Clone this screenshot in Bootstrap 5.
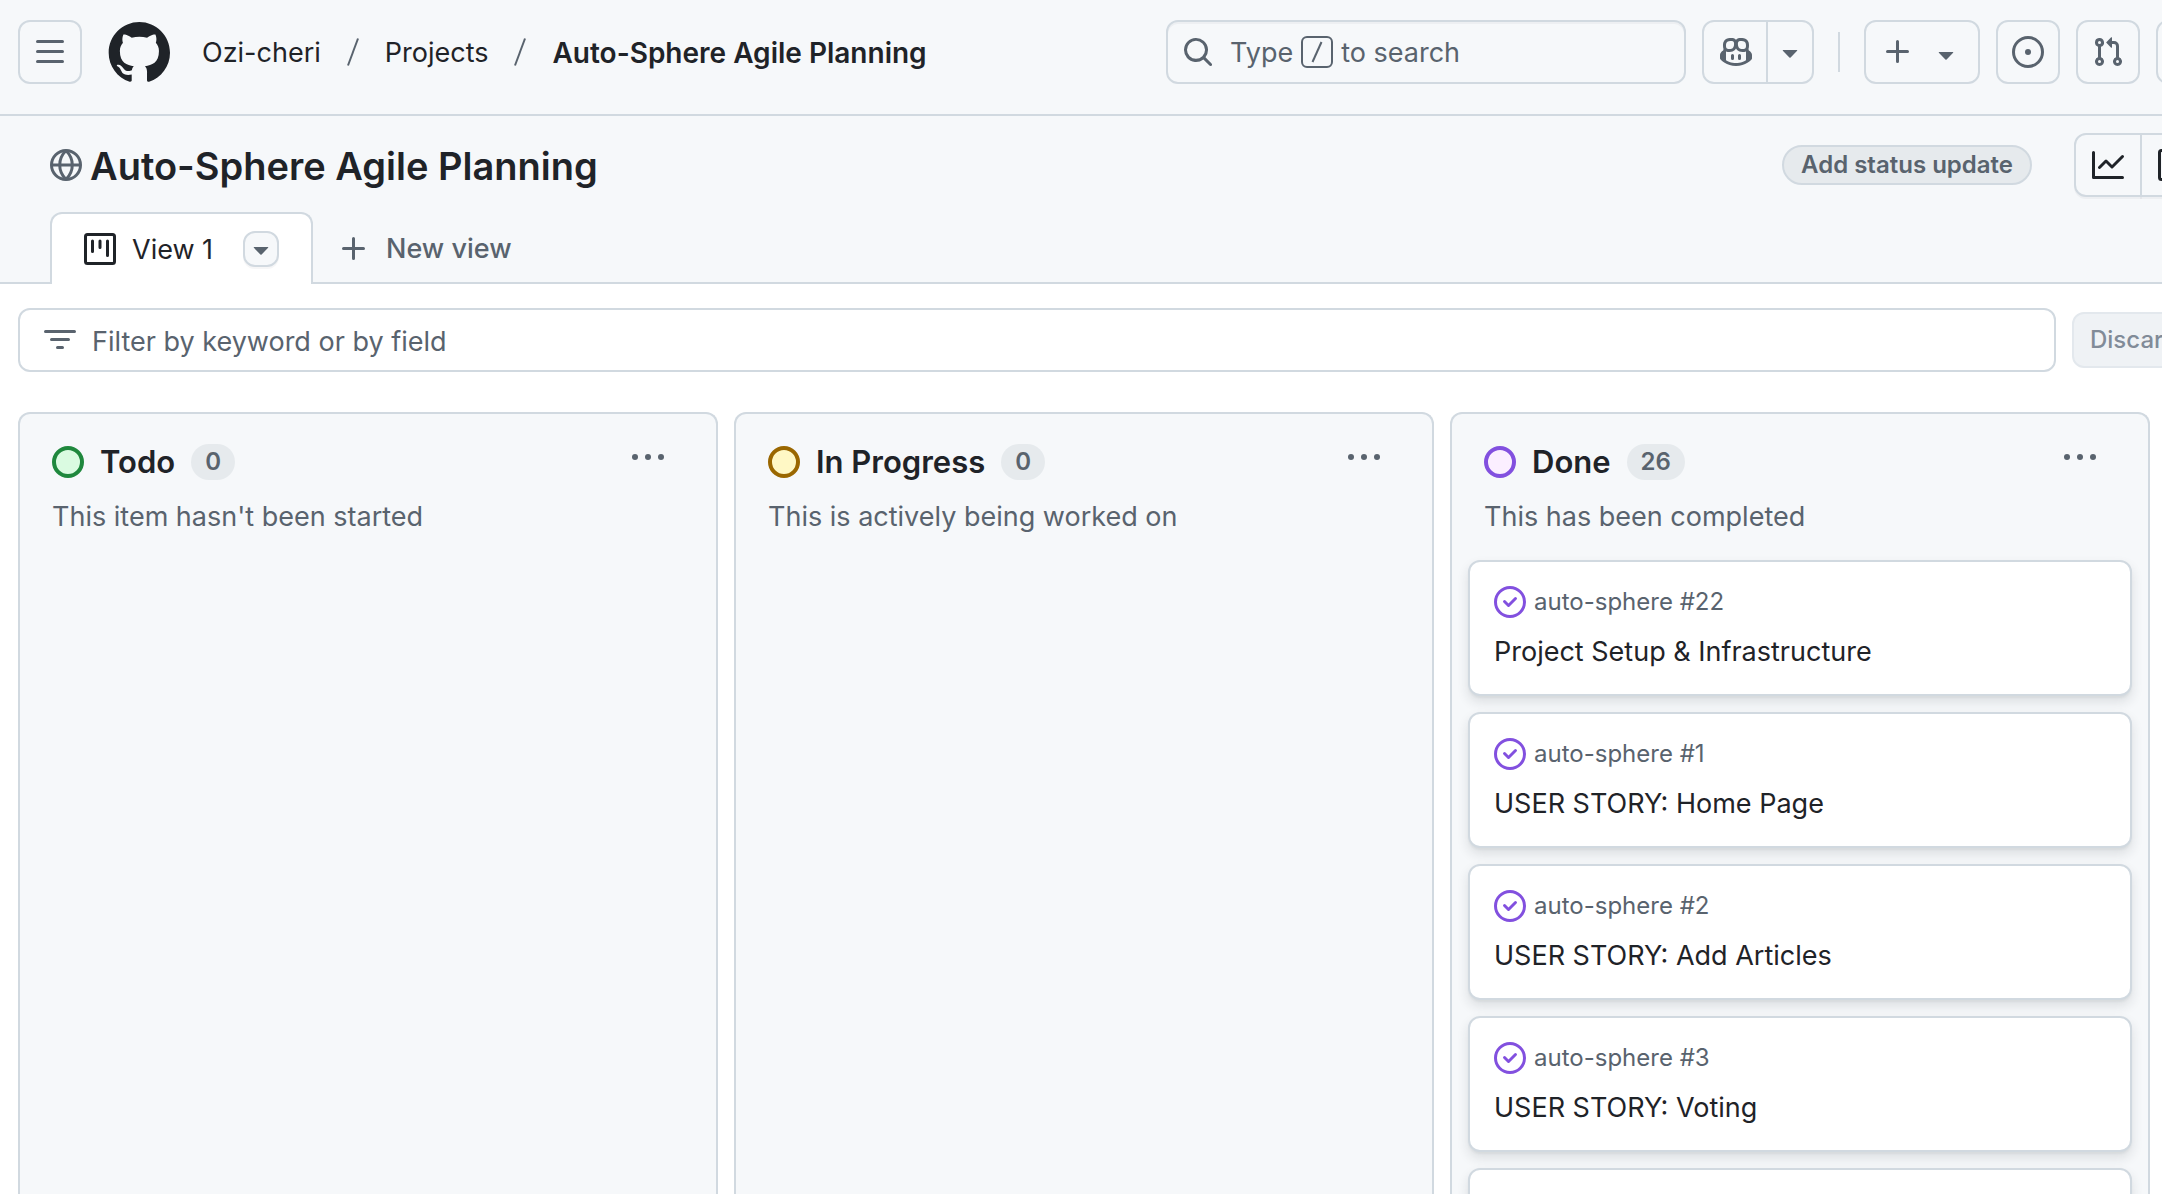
<!DOCTYPE html>
<html lang="en">
<head>
<meta charset="utf-8">
<meta name="viewport" content="width=device-width, initial-scale=1">
<title>Auto-Sphere Agile Planning</title>
<link href="https://cdn.jsdelivr.net/npm/bootstrap@5.3.0/dist/css/bootstrap.min.css" rel="stylesheet">
<style>
:root{--line:#d1d9e0;--ink:#1f2328;--soft:#59636e;--canvas:#f6f8fa;--chip:#e6eaed;--done:#8250df}
body{font-family:Inter,"Noto Sans",sans-serif;font-size:27px;line-height:40px;color:var(--ink);background:#fff;height:100vh;overflow:hidden}
svg{display:block;flex:none;fill:currentColor}
.oct{width:32px;height:32px}
.page{width:calc(100% + 58px);height:100%}
.soft{color:var(--soft)}
.topbar{background:var(--canvas);border-bottom:2px solid var(--line);padding:20px 0 30px 18px;height:116px}
.box{height:64px;min-width:64px;padding:0;border:2px solid var(--line);border-radius:12px;background:var(--canvas);color:var(--soft);display:flex;align-items:center;justify-content:center;flex:none}
.logo{margin-left:24px;color:var(--ink)}
.crumbs{margin-left:32px;gap:26px}
.crumbs a{color:var(--ink);text-decoration:none;white-space:nowrap;padding-top:2px}
.crumbs .here{font-size:28px;font-weight:600}
.crumbs svg{width:12px;height:28px;stroke:var(--soft);stroke-width:2;fill:none}
.searchbox{width:520px;justify-content:flex-start;padding-left:14px;box-shadow:inset 0 2px 0 rgba(31,35,40,.04)}
.searchbox span{padding-top:2px}
.searchbox kbd{width:32px;height:32px;padding:0;border:2px solid var(--soft);border-radius:6px;background:none;display:flex;align-items:center;justify-content:center;color:var(--soft);margin:0 8px}
.searchbox kbd svg{width:12px;height:22px;stroke:currentColor;stroke-width:2;fill:none}
.split-l{width:66px;padding-left:16px;justify-content:flex-start;border-radius:12px 0 0 12px}
.split-r{width:48px;min-width:48px;margin-left:-2px;border-radius:0 12px 12px 0}
.rule{width:2px;height:40px;background:var(--line)}
.newbtn{width:116px;justify-content:flex-start;padding-left:16px;gap:16px}
.newbtn .oct + .oct{margin-top:4px}
.projhead{background:var(--canvas);padding-top:16px;border-bottom:2px solid var(--line)}
.titlerow{padding-left:50px}
.projhead h1{font-size:38px;line-height:64px;font-weight:600;padding-top:2px}
.status{height:40px;padding:0 17px;border:2px solid var(--line);border-radius:20px;background:var(--chip);color:var(--soft);font-size:24px;line-height:36px;font-weight:600;margin-right:42px}
.tools .box{color:var(--ink);box-shadow:0 2px 0 rgba(31,35,40,.04)}
.tools .wide{width:80px;margin-left:-2px;padding-left:16px;justify-content:flex-start;border-radius:0 12px 12px 0}
.tabs{padding-left:50px;margin-top:14px;margin-bottom:-2px}
.tab-on{width:263px;height:72px;border:2px solid var(--line);border-bottom:0;border-radius:12px 12px 0 0;background:#fff;padding:0 32px}
.tab-on a{color:var(--ink);text-decoration:none;white-space:nowrap;padding-top:2px}
.mini{width:36px;height:36px;padding:0;border:2px solid var(--line);border-radius:12px;background:var(--canvas);color:var(--soft);display:flex;align-items:center;justify-content:center;box-shadow:0 2px 0 rgba(31,35,40,.04)}
.newview{border:0;background:none;color:var(--soft);font-weight:500;padding:2px 0 0;margin-left:25px;gap:16px}
.filterrow{padding:24px 0 40px 18px;gap:16px}
.filterbox{height:64px;border:2px solid var(--line);border-radius:12px;padding:0 24px;gap:16px;color:var(--soft)}
.filterbox input{border:0;outline:0;background:none;padding:2px 0 0;color:var(--ink);height:42px}
.filterbox input::placeholder{color:var(--soft);opacity:1}
.discard{width:148px;height:56px;border:2px solid #e3e8ed;border-radius:12px;background:#eff2f5;color:#818b98;font-size:24px;font-weight:500;padding:0 16px;text-align:left}
.board{gap:16px;padding-left:18px}
.lane{flex:0 0 700px;border:2px solid var(--line);border-bottom:0;border-radius:12px 12px 0 0;background:var(--canvas);padding:26px 16px 0}
.lanehead{padding:0 16px;height:44px;gap:16px}
.lanehead h2{font-size:31px;line-height:40px;font-weight:600}
.ring{width:32px;height:32px;border:4px solid;border-radius:50%}
.ring-g{color:#1f883d;background:#dafbe1}.ring-y{color:#9a6700;background:#fff8c5}.ring-p{color:var(--done);background:#fbefff}
.count{min-width:44px;height:36px;border-radius:18px;padding:0 14px;background:var(--chip);color:var(--soft);font-size:24px;line-height:36px;font-weight:600;text-align:center}
.more{border:0;background:none;padding:0 20px 0 0;color:var(--soft);margin-bottom:10px}
.lanenote{padding:0 16px;margin:13px 0 23px;color:var(--soft)}
.ticket{height:136px;flex:none;border:2px solid var(--line);border-radius:12px;background:#fff;padding:22px 24px 0;box-shadow:0 2px 2px rgba(37,41,46,.04),0 6px 12px rgba(37,41,46,.12)}
.ticket .ref{font-size:24px;line-height:36px;gap:8px}
.ticket .ref svg{color:var(--done)}
.ticket a{color:var(--ink);text-decoration:none;margin-top:12px;display:block}
</style>
</head>
<body>
<svg class="d-none" xmlns="http://www.w3.org/2000/svg">
<symbol id="caret" viewBox="0 0 16 16"><path d="m4.427 7.427 3.396 3.396a.25.25 0 0 0 .354 0l3.396-3.396A.25.25 0 0 0 11.396 7H4.604a.25.25 0 0 0-.177.427Z"/></symbol>
<symbol id="plus" viewBox="0 0 16 16"><path d="M7.75 2a.75.75 0 0 1 .75.75V7h4.25a.75.75 0 0 1 0 1.5H8.5v4.25a.75.75 0 0 1-1.5 0V8.5H2.75a.75.75 0 0 1 0-1.5H7V2.75A.75.75 0 0 1 7.75 2Z"/></symbol>
<symbol id="dots" viewBox="0 0 16 16"><circle cx="1.5" cy="8" r="1.5"/><circle cx="8" cy="8" r="1.5"/><circle cx="14.5" cy="8" r="1.5"/></symbol>
<symbol id="closed" viewBox="0 0 16 16"><path d="M11.28 6.78a.75.75 0 0 0-1.06-1.06L7.25 8.69 5.78 7.22a.75.75 0 0 0-1.06 1.06l2 2a.75.75 0 0 0 1.06 0l3.5-3.5Z"/><path d="M16 8A8 8 0 1 1 0 8a8 8 0 0 1 16 0Zm-1.5 0a6.5 6.5 0 1 0-13 0 6.5 6.5 0 0 0 13 0Z"/></symbol>
</svg>
<div class="page d-flex flex-column">
  <header class="topbar d-flex align-items-center flex-shrink-0">
    <button class="box" aria-label="Open menu"><svg class="oct" viewBox="0 0 16 16"><path d="M1 2.75A.75.75 0 0 1 1.75 2h12.5a.75.75 0 0 1 0 1.5H1.75A.75.75 0 0 1 1 2.75Zm0 5A.75.75 0 0 1 1.75 7h12.5a.75.75 0 0 1 0 1.5H1.75A.75.75 0 0 1 1 7.75ZM1.75 12h12.5a.75.75 0 0 1 0 1.5H1.75a.75.75 0 0 1 0-1.5Z"/></svg></button>
    <a class="logo" href="#" aria-label="GitHub"><svg width="64" height="64" viewBox="0 0 24 24"><path d="M12.5.75C6.146.75 1 5.896 1 12.25c0 5.089 3.292 9.387 7.863 10.91.575.101.79-.244.79-.546 0-.273-.014-1.178-.014-2.142-2.889.532-3.636-.704-3.866-1.35-.13-.331-.69-1.352-1.18-1.625-.402-.216-.977-.748-.014-.762.906-.014 1.553.834 1.769 1.179 1.035 1.74 2.688 1.25 3.349.948.1-.747.402-1.25.733-1.538-2.559-.287-5.232-1.279-5.232-5.678 0-1.25.445-2.285 1.178-3.09-.115-.288-.517-1.467.115-3.048 0 0 .963-.302 3.163 1.179.92-.259 1.897-.388 2.875-.388.977 0 1.955.13 2.875.388 2.2-1.495 3.162-1.179 3.162-1.179.633 1.581.23 2.76.115 3.048.733.805 1.179 1.825 1.179 3.09 0 4.413-2.688 5.39-5.247 5.678.417.36.776 1.05.776 2.128 0 1.538-.014 2.774-.014 3.162 0 .302.216.662.79.547C20.709 21.637 24 17.324 24 12.25 24 5.896 18.854.75 12.5.75Z"/></svg></a>
    <nav class="crumbs d-flex align-items-center" aria-label="Breadcrumb">
      <a href="#">Ozi-cheri</a>
      <svg viewBox="0 0 12 28"><path d="M1 27.500 11 .500"/></svg>
      <a href="#">Projects</a>
      <svg viewBox="0 0 12 28"><path d="M1 27.500 11 .500"/></svg>
      <a href="#" class="here">Auto-Sphere Agile Planning</a>
    </nav>
    <div class="d-flex align-items-center gap-3 ms-auto flex-shrink-0">
      <button class="box searchbox"><svg class="oct" viewBox="0 0 16 16"><path d="M10.68 11.74a6 6 0 0 1-7.922-8.982 6 6 0 0 1 8.982 7.922l3.04 3.04a.749.749 0 0 1-.326 1.275.749.749 0 0 1-.734-.215ZM11.5 7a4.499 4.499 0 1 0-8.997 0A4.499 4.499 0 0 0 11.5 7Z"/></svg><span class="ps-3">Type</span><kbd><svg viewBox="0 0 12 22"><path d="M1.500 21 10.500 1"/></svg></kbd><span>to search</span></button>
      <div class="d-flex">
        <button class="box split-l" aria-label="Copilot"><svg class="oct" viewBox="0 0 16 16"><path d="M7.998 15.035c-4.562 0-7.873-2.914-7.998-3.749V9.338c.085-.628.677-1.686 1.588-2.065.013-.07.024-.143.036-.218.029-.183.06-.384.126-.612-.201-.508-.254-1.084-.254-1.656 0-.87.128-1.769.693-2.484.579-.733 1.494-1.124 2.724-1.261 1.206-.134 2.262.034 2.944.765.05.053.096.108.139.165.044-.057.094-.112.143-.165.682-.731 1.738-.899 2.944-.765 1.23.137 2.145.528 2.724 1.261.566.715.693 1.614.693 2.484 0 .572-.053 1.148-.254 1.656.066.228.098.429.126.612.012.076.024.148.037.218.924.385 1.522 1.471 1.591 2.095v1.872c0 .766-3.351 3.795-8.002 3.795Zm0-1.485c2.28 0 4.584-1.11 5.002-1.433V7.862l-.023-.116c-.49.21-1.075.291-1.727.291-1.146 0-2.059-.327-2.71-.991A3.222 3.222 0 0 1 8 6.303a3.24 3.24 0 0 1-.544.743c-.65.664-1.563.991-2.71.991-.652 0-1.236-.081-1.727-.291l-.023.116v4.255c.419.323 2.722 1.433 5.002 1.433ZM6.762 2.83c-.193-.206-.637-.413-1.682-.297-1.019.113-1.479.404-1.713.7-.247.312-.369.789-.369 1.554 0 .793.129 1.171.308 1.371.162.181.519.379 1.442.379.853 0 1.339-.235 1.638-.54.315-.322.527-.827.617-1.553.117-.935-.037-1.395-.241-1.614Zm4.155-.297c-1.044-.116-1.488.091-1.681.297-.204.219-.359.679-.242 1.614.091.726.303 1.231.618 1.553.299.305.784.54 1.638.54.922 0 1.28-.198 1.442-.379.179-.2.308-.578.308-1.371 0-.765-.123-1.242-.37-1.554-.233-.296-.693-.587-1.713-.7Z"/><path d="M6.25 9.037a.75.75 0 0 1 .75.75v1.501a.75.75 0 0 1-1.5 0V9.787a.75.75 0 0 1 .75-.75Zm4.25.75v1.501a.75.75 0 0 1-1.5 0V9.787a.75.75 0 0 1 1.5 0Z"/></svg></button>
        <button class="box split-r" aria-label="Copilot options"><svg class="oct"><use href="#caret"/></svg></button>
      </div>
      <div class="rule mx-2"></div>
      <button class="box newbtn" aria-label="Create new"><svg class="oct"><use href="#plus"/></svg><svg class="oct"><use href="#caret"/></svg></button>
      <button class="box" aria-label="Issues"><svg class="oct" viewBox="0 0 16 16"><path d="M8 9.500a1.500 1.500 0 1 0 0-3 1.500 1.500 0 0 0 0 3Z"/><path d="M8 0a8 8 0 1 1 0 16A8 8 0 0 1 8 0ZM1.500 8a6.500 6.500 0 1 0 13 0 6.500 6.500 0 0 0-13 0Z"/></svg></button>
      <button class="box" aria-label="Pull requests"><svg class="oct" viewBox="0 0 16 16"><path d="M1.5 3.25a2.25 2.25 0 1 1 3 2.122v5.256a2.251 2.251 0 1 1-1.5 0V5.372A2.25 2.25 0 0 1 1.5 3.25Zm5.677-.177L9.573.677A.25.25 0 0 1 10 .854V2.5h1A2.5 2.5 0 0 1 13.5 5v5.628a2.251 2.251 0 1 1-1.5 0V5a1 1 0 0 0-1-1h-1v1.646a.25.25 0 0 1-.427.177L7.177 3.427a.25.25 0 0 1 0-.354ZM3.75 2.5a.75.75 0 1 0 0 1.5.75.75 0 0 0 0-1.5Zm0 9.5a.75.75 0 1 0 0 1.5.75.75 0 0 0 0-1.5Zm8.25.75a.75.75 0 1 0 1.5 0 .75.75 0 0 0-1.5 0Z"/></svg></button>
      <button class="box" aria-label="Notifications"></button>
    </div>
  </header>

  <section class="projhead flex-shrink-0">
    <div class="titlerow d-flex align-items-center">
      <svg class="oct soft me-2" viewBox="0 0 16 16"><g fill="none" stroke="currentColor" stroke-width="1.500"><circle cx="8" cy="8" r="7.250"/><path d="M.750 8h14.500M8 .750C3.800 5 3.800 11 8 15.250M8 .750c4.200 4.250 4.200 10.250 0 14.500"/></g></svg>
      <h1 class="m-0">Auto-Sphere Agile Planning</h1>
      <button class="status ms-auto">Add status update</button>
      <div class="tools d-flex">
        <button class="box split-l w-auto px-3" aria-label="Insights"><svg class="oct" viewBox="0 0 16 16"><path d="M1.5 1.75V13.5h13.75a.75.75 0 0 1 0 1.5H.75a.75.75 0 0 1-.75-.75V1.75a.75.75 0 0 1 1.5 0Zm14.28 2.53-5.25 5.25a.75.75 0 0 1-1.06 0L7 7.06 4.28 9.78a.751.751 0 0 1-1.042-.018.751.751 0 0 1-.018-1.042l3.25-3.25a.75.75 0 0 1 1.06 0L10 7.94l4.72-4.72a.751.751 0 0 1 1.042.018.751.751 0 0 1 .018 1.042Z"/></svg></button>
        <button class="box wide" aria-label="Project details"><svg class="oct" viewBox="0 0 16 16"><g fill="none" stroke="currentColor" stroke-width="1.500"><rect x=".750" y=".750" width="14.500" height="14.500" rx="1"/><path d="M10 1v14"/></g></svg></button>
      </div>
    </div>
    <div class="tabs d-flex align-items-center">
      <div class="tab-on d-flex align-items-center">
        <svg class="oct" viewBox="0 0 16 16"><g fill="none" stroke="currentColor" stroke-width="1.500" stroke-linecap="round"><rect x=".750" y=".750" width="14.500" height="14.500" rx="1"/><path d="M4.250 4v5.250M8 4v3.250M11.750 4v7.250"/></g></svg>
        <a href="#" class="ps-3">View 1</a>
        <button class="mini ms-auto" aria-label="View options"><svg class="oct"><use href="#caret"/></svg></button>
      </div>
      <button class="newview d-flex align-items-center"><svg class="oct"><use href="#plus"/></svg>New view</button>
    </div>
  </section>

  <div class="filterrow d-flex align-items-center flex-shrink-0">
    <label class="filterbox d-flex align-items-center flex-grow-1"><svg class="oct" viewBox="0 0 16 16"><path d="M.75 3h14.5a.75.75 0 0 1 0 1.5H.75a.75.75 0 0 1 0-1.5ZM3 7.75A.75.75 0 0 1 3.75 7h8.5a.75.75 0 0 1 0 1.5h-8.5A.75.75 0 0 1 3 7.75Zm3 4a.75.75 0 0 1 .75-.75h2.5a.75.75 0 0 1 0 1.5h-2.5a.75.75 0 0 1-.75-.75Z"/></svg><input class="flex-grow-1" type="text" placeholder="Filter by keyword or by field" aria-label="Filter by keyword or by field"></label>
    <button class="discard flex-shrink-0" disabled>Discard</button>
  </div>

  <main class="board d-flex flex-grow-1 overflow-hidden">
    <section class="lane">
      <div class="lanehead d-flex align-items-center"><span class="ring ring-g"></span><h2 class="m-0">Todo</h2><span class="count">0</span><button class="more ms-auto" aria-label="Todo options"><svg class="oct"><use href="#dots"/></svg></button></div>
      <p class="lanenote">This item hasn't been started</p>
    </section>
    <section class="lane">
      <div class="lanehead d-flex align-items-center"><span class="ring ring-y"></span><h2 class="m-0">In Progress</h2><span class="count">0</span><button class="more ms-auto" aria-label="In Progress options"><svg class="oct"><use href="#dots"/></svg></button></div>
      <p class="lanenote">This is actively being worked on</p>
    </section>
    <section class="lane">
      <div class="lanehead d-flex align-items-center"><span class="ring ring-p"></span><h2 class="m-0">Done</h2><span class="count">26</span><button class="more ms-auto" aria-label="Done options"><svg class="oct"><use href="#dots"/></svg></button></div>
      <p class="lanenote">This has been completed</p>
      <div class="d-flex flex-column gap-3">
        <article class="ticket"><div class="ref soft d-flex align-items-center"><svg class="oct"><use href="#closed"/></svg>auto-sphere #22</div><a href="#">Project Setup &amp; Infrastructure</a></article>
        <article class="ticket"><div class="ref soft d-flex align-items-center"><svg class="oct"><use href="#closed"/></svg>auto-sphere #1</div><a href="#">USER STORY: Home Page</a></article>
        <article class="ticket"><div class="ref soft d-flex align-items-center"><svg class="oct"><use href="#closed"/></svg>auto-sphere #2</div><a href="#">USER STORY: Add Articles</a></article>
        <article class="ticket"><div class="ref soft d-flex align-items-center"><svg class="oct"><use href="#closed"/></svg>auto-sphere #3</div><a href="#">USER STORY: Voting</a></article>
        <article class="ticket"></article>
      </div>
    </section>
  </main>
</div>
<script src="https://cdn.jsdelivr.net/npm/bootstrap@5.3.0/dist/js/bootstrap.bundle.min.js"></script>
</body>
</html>
